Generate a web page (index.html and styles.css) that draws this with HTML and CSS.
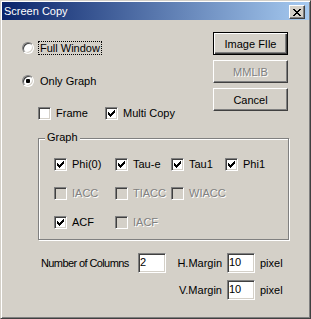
FILE: index.html
```html
<!DOCTYPE html>
<html lang="en">
<head>
  <meta charset="UTF-8" />
  <title>Screen Copy</title>
  <link rel="stylesheet" href="styles.css">
</head>
<body>

<div class="window">
  <div class="titlebar">
    <span class="title">Screen Copy</span>
    <span class="close-btn">
      <svg width="8" height="7" viewBox="0 0 8 7" shape-rendering="crispEdges">
        <path d="M0 0h2v1h-2z M6 0h2v1h-2z M1 1h2v1h-2z M5 1h2v1h-2z M2 2h4v1h-4z M3 3h2v1h-2z M2 4h4v1h-4z M1 5h2v1h-2z M5 5h2v1h-2z M0 6h2v1h-2z M6 6h2v1h-2z" fill="#000"/>
      </svg>
    </span>
  </div>

  <div class="client">
    <div class="top">
      <div class="options">
        <div class="opt">
          <span class="radio"></span>
          <span class="caption focus">Full Window</span>
        </div>
        <div class="opt row-gap">
          <span class="radio on"></span>
          <span class="caption">Only Graph</span>
        </div>
        <div class="check-line row-gap">
          <div class="opt first"><span class="check"></span>Frame</div>
          <div class="opt"><span class="check on"></span>Multi Copy</div>
        </div>
      </div>

      <div class="buttons">
        <div class="btn default">Image FIle</div>
        <div class="btn disabled">MMLIB</div>
        <div class="btn">Cancel</div>
      </div>
    </div>

    <div class="group">
      <span class="group-label">Graph</span>
      <div class="graph-grid">
        <div class="opt"><span class="check on"></span>Phi(0)</div>
        <div class="opt"><span class="check on"></span>Tau-e</div>
        <div class="opt"><span class="check on"></span>Tau1</div>
        <div class="opt"><span class="check on"></span>Phi1</div>

        <div class="opt disabled"><span class="check"></span>IACC</div>
        <div class="opt disabled"><span class="check"></span>TIACC</div>
        <div class="opt disabled"><span class="check"></span>WIACC</div>
        <div></div>

        <div class="opt"><span class="check on"></span>ACF</div>
        <div class="opt disabled"><span class="check"></span>IACF</div>
      </div>
    </div>

    <div class="fields">
      <span class="field-label cols">Number of Columns</span>
      <span class="edit">2</span>
      <span class="field-label right">H.Margin</span>
      <span class="edit">10</span>
      <span class="field-label">pixel</span>

      <span></span>
      <span></span>
      <span class="field-label right">V.Margin</span>
      <span class="edit">10</span>
      <span class="field-label">pixel</span>
    </div>
  </div>
</div>

</body>
</html>
```

FILE: styles.css
```css
:root {
  --face: #d4d0c8;
  --shadow: #808080;
  --dark: #404040;
  --light: #fff;
  --title-left: #0a246a;
  --title-right: #a6caf0;
}

html, body {
  margin: 0;
  background: var(--face);
}

body {
  font-family: "Liberation Sans", Arial, sans-serif;
  font-size: 11px;
  color: #000;
}

.window {
  width: 311px;
  height: 319px;
  box-sizing: border-box;
  border: 1px solid;
  border-color: var(--face) var(--dark) var(--dark) var(--face);
  box-shadow: inset 1px 1px 0 var(--light), inset -1px -1px 0 var(--shadow);
  padding: 1px 1px 2px 1px;
  background: var(--face);
}

/* title bar */
.titlebar {
  height: 18px;
  display: flex;
  align-items: center;
  background: linear-gradient(to right, var(--title-left), var(--title-right));
  padding: 0 4px 0 2px;
}

.title {
  flex: 1;
  color: #fff;
  font-size: 11px;
  line-height: 13px;
}

.close-btn {
  width: 16px;
  height: 14px;
  box-sizing: border-box;
  margin-top: 2px;
  display: flex;
  align-items: center;
  justify-content: center;
  background: var(--face);
  border: 1px solid;
  border-color: var(--light) var(--dark) var(--dark) var(--light);
  box-shadow: inset -1px -1px 0 var(--shadow);
}

/* dialog body */
.client {
  padding: 0 0 0 20px;
}

.top {
  display: flex;
}

.options {
  flex: 1;
  padding-top: 21px;
}

.opt {
  display: flex;
  align-items: center;
  height: 13px;
  line-height: 13px;
  white-space: nowrap;
}

.row-gap {
  margin-top: 20px;
}

.caption {
  margin-left: 4px;
  padding: 0 1px;
  line-height: 12px;
  border: 1px solid transparent;
}

.caption.focus {
  border: 1px dotted #000;
}

.radio {
  position: relative;
  width: 12px;
  height: 12px;
  box-sizing: border-box;
  border-radius: 50%;
  background: #fff;
  border: 1px solid;
  border-color: var(--shadow) var(--light) var(--light) var(--shadow);
  box-shadow: inset 1px 1px 0 var(--dark), inset -1px -1px 0 var(--face);
}

.radio.on::after {
  content: "";
  position: absolute;
  left: 3px;
  top: 3px;
  width: 4px;
  height: 4px;
  border-radius: 1px;
  background: #000;
}

.check-line {
  display: flex;
  padding-left: 16px;
}

.check-line .first {
  width: 67px;
}

.check {
  width: 13px;
  height: 13px;
  box-sizing: border-box;
  margin-right: 5px;
  flex-shrink: 0;
  background: #fff no-repeat 2px 2px;
  border: 1px solid;
  border-color: var(--shadow) var(--light) var(--light) var(--shadow);
  box-shadow: inset 1px 1px 0 var(--dark), inset -1px -1px 0 var(--face);
}

.check.on {
  background-image: url("data:image/svg+xml,%3Csvg xmlns='http://www.w3.org/2000/svg' width='7' height='7' shape-rendering='crispEdges'%3E%3Cpath d='M6 0h1v1h-1z M5 1h2v1h-2z M0 2h1v1h-1z M4 2h3v1h-3z M0 3h2v1h-2z M3 3h3v1h-3z M0 4h5v1h-5z M1 5h3v1h-3z M2 6h1v1h-1z' fill='%23000'/%3E%3C/svg%3E");
}

.disabled {
  color: var(--shadow);
  text-shadow: 1px 1px 0 var(--light);
}

.opt.disabled .check {
  background-color: var(--face);
}

/* buttons */
.buttons {
  padding-top: 12px;
  margin-right: 21px;
  display: flex;
  flex-direction: column;
  gap: 5px;
}

.btn {
  width: 75px;
  height: 23px;
  box-sizing: border-box;
  display: flex;
  align-items: center;
  justify-content: center;
  background: var(--face);
  border: 1px solid;
  border-color: var(--light) var(--dark) var(--dark) var(--light);
  box-shadow: inset -1px -1px 0 var(--shadow);
}

.btn.default {
  border-color: #000;
  box-shadow: inset 1px 1px 0 var(--light), inset -1px -1px 0 var(--dark), inset -2px -2px 0 var(--shadow);
}

/* group box */
.group {
  position: relative;
  width: 251px;
  box-sizing: border-box;
  margin: 18px 0 0 16px;
  padding: 19px 0 10px 15px;
  border: 1px solid var(--shadow);
  box-shadow: inset 1px 1px 0 var(--light), 1px 1px 0 var(--light);
}

.group-label {
  position: absolute;
  left: 6px;
  top: -8px;
  padding: 0 2px;
  line-height: 13px;
  background: var(--face);
}

.graph-grid {
  display: grid;
  grid-template-columns: 61px 56px 54px auto;
  grid-auto-rows: 13px;
  row-gap: 16px;
}

/* bottom edit fields */
.fields {
  display: grid;
  grid-template-columns: 92px 28px 51px 28px auto;
  grid-auto-rows: 20px;
  column-gap: 5px;
  row-gap: 7px;
  margin: 13px 0 0 19px;
  align-items: center;
}

.field-label {
  white-space: nowrap;
}

.field-label.right {
  text-align: right;
}

.field-label.cols {
  letter-spacing: -0.6px;
}

.edit {
  height: 20px;
  box-sizing: border-box;
  padding-left: 1px;
  line-height: 16px;
  background: #fff;
  border: 1px solid;
  border-color: var(--shadow) var(--light) var(--light) var(--shadow);
  box-shadow: inset 1px 1px 0 var(--dark), inset -1px -1px 0 var(--face);
}
```
